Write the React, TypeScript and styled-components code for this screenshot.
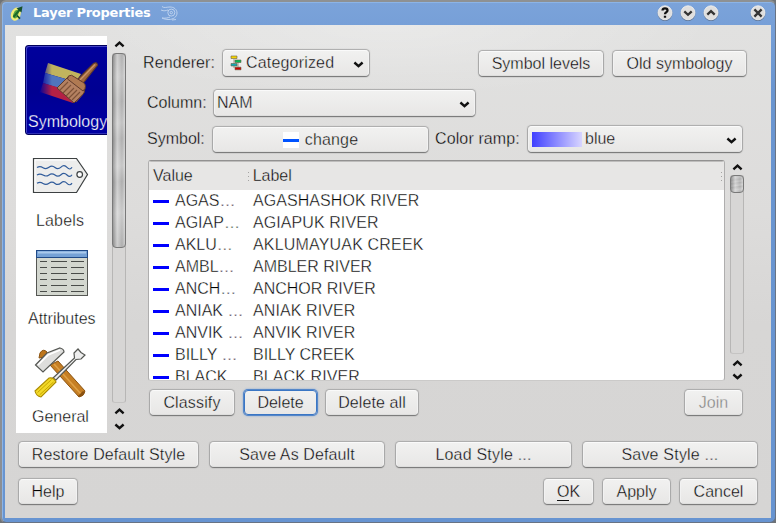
import React from "react";
import styled, { createGlobalStyle, css } from "styled-components";

const Global = createGlobalStyle`
  * { box-sizing: border-box; }
  html, body { margin: 0; padding: 0; overflow: hidden; }
  body { background: #6f7377; }
`;

/* A hairline in the surface colour slims the strokes of the letters. */
const slim = (paper: string, amount = 0.35) => css`
  -webkit-text-stroke: ${amount}px ${paper};
`;

const Dialog = styled.div`
  width: 776px;
  height: 523px;
  display: flex;
  flex-direction: column;
  background: linear-gradient(#7ba3da, #6a95d0 90px, #6794d1);
  border: 1px solid #687384;
  border-top: 2px solid #8e9193;
  border-left: 2px solid #8c8f94;
  border-radius: 6px;
  box-shadow: inset 1px 1px 0 #8cb4e6;
  padding: 0 4px 4px 3px;
  font-family: "Liberation Sans", Arial, sans-serif;
  font-size: 16px;
  line-height: 22px;
  color: #000;
  white-space: nowrap;
`;

const TitleBar = styled.header`
  height: 23px;
  flex: none;
  display: flex;
  align-items: center;
  padding: 0 5px 1px 5px;
`;

const Title = styled.h1`
  margin: 0 8px 1px 9px;
  font: bold 13px/18px "DejaVu Sans", sans-serif;
  letter-spacing: -0.25px;
  width: 119px;
  color: #fff;
`;

const WindowButtons = styled.div`
  display: flex;
  margin-left: auto;
  gap: 7px;
  svg:last-child { margin-left: 24px; }
`;

const Content = styled.main`
  flex: 1;
  min-height: 0;
  display: flex;
  flex-direction: column;
  padding: 11px 13px 0 11px;
  background:
    radial-gradient(ellipse 330px 70px at 50% 0, rgba(255, 255, 255, 0.28), transparent),
    linear-gradient(#e1e1e0, #dddcdb 190px, #d7d6d5 300px, #d6d5d4);
  ${slim("#dedddc")}
`;

const Upper = styled.div`
  display: flex;
  height: 397px;
`;

const PageList = styled.nav`
  width: 91px;
  height: 397px;
  background: #fff;
  overflow: hidden;
  padding: 8px 0 0 9px;
  ${slim("#fff")}
`;

const PageItem = styled.div<{ $active?: boolean }>`
  width: 88px;
  height: 98px;
  display: flex;
  flex-direction: column;
  justify-content: flex-end;
  ${(p) =>
    p.$active &&
    css`
      height: 90px;
      margin-top: 1px;
      border: 1px solid #00005c;
      border-radius: 3px;
      box-shadow: inset 1px 1px 0 #4444c6, inset 0 -1px 0 #3030b4;
      background: linear-gradient(#00009c, #000092 50%, #0000a2);
      color: #fff;
      ${slim("#00009c", 0.25)}
    `}
`;

const PageIcon = styled.div`
  height: 64px;
  svg { display: block; }
`;

const PageName = styled.span<{ $indent: number; $spacing?: number }>`
  height: 24px;
  line-height: 24px;
  padding-left: ${(p) => p.$indent}px;
  letter-spacing: ${(p) => p.$spacing ?? 0}px;
`;

const Scroll = styled.div<{ $height: number }>`
  width: 14px;
  height: ${(p) => p.$height}px;
  margin-left: 5px;
  display: flex;
  flex-direction: column;
  align-items: center;
  svg { flex: none; }
`;

const ScrollStep = styled.div<{ $height: number }>`
  height: ${(p) => p.$height}px;
  flex: none;
  display: flex;
  align-items: center;
`;

const Track = styled.div`
  width: 14px;
  flex: 1;
  border: 1px solid #b7b6b5;
  border-bottom-color: #c5c4c3;
  border-radius: 3px;
  background: #d7d6d5;
`;

const Thumb = styled.div<{ $height: number }>`
  width: 14px;
  height: ${(p) => p.$height}px;
  margin: -1px;
  border: 1px solid #797979;
  border-radius: 4px;
  background:
    linear-gradient(90deg, rgba(90, 90, 90, 0.35), rgba(255, 255, 255, 0.42) 35%, rgba(255, 255, 255, 0.05) 75%, rgba(255, 255, 255, 0.4)),
    linear-gradient(172deg, #aaa 0, #bdbdbd 12%, #aaa 25%, #bdbdbd 36%, #aaa 44%, #c1c1c1 58%, #a9a9a9 66%, #c4c4c4 82%, #a8a8a8);
`;

const Pane = styled.section`
  margin-left: 17px;
  width: 606px;
  display: flex;
  flex-direction: column;
`;

const Row = styled.div<{ $top?: number; $left?: number; $height?: number }>`
  display: flex;
  align-items: center;
  flex: none;
  margin-top: ${(p) => p.$top ?? 0}px;
  padding-left: ${(p) => p.$left ?? 0}px;
  height: ${(p) => p.$height ?? 28}px;
`;

const FieldLabel = styled.label<{ $left?: number; $width: number; $spacing?: number }>`
  margin-left: ${(p) => p.$left ?? 0}px;
  width: ${(p) => p.$width}px;
  flex: none;
  letter-spacing: ${(p) => p.$spacing ?? 0}px;
  padding-bottom: 1px;
`;

const face = css`
  font: inherit;
  color: inherit;
  flex: none;
  border: 1px solid;
  border-color: #fafafa #f2f2f2 #dededd;
  border-radius: 4px;
  background: linear-gradient(#f1f1f0, #e8e7e6);
  box-shadow: 0 1px 1px #777, 0 0 1px 0.5px #aaa;
  ${slim("#edecec")}
`;

const Button = styled.button<{ $width: number; $left?: number; $spacing?: number; $focus?: boolean }>`
  ${face}
  width: ${(p) => p.$width}px;
  height: 25px;
  margin-left: ${(p) => p.$left ?? 0}px;
  padding: 1px 0 0;
  line-height: 22px;
  letter-spacing: ${(p) => p.$spacing ?? 0}px;
  display: flex;
  justify-content: center;
  align-items: center;
  &:disabled { color: #7d7d7c; }
  ${(p) =>
    p.$focus &&
    css`
      border-color: #3a76c4;
      box-shadow: 0 0 0 1px #5587c9, 0 0 2px 1px #7fa4d6;
    `}
`;

const Select = styled.div<{ $width: number; $pad: number }>`
  ${face}
  width: ${(p) => p.$width}px;
  height: 26px;
  padding: 0 4px 0 ${(p) => p.$pad}px;
  display: flex;
  align-items: center;
  & > svg:last-child { margin: 2px 0 0 auto; }
`;

const SelectText = styled.span<{ $left?: number; $spacing?: number }>`
  margin-left: ${(p) => p.$left ?? 0}px;
  letter-spacing: ${(p) => p.$spacing ?? 0}px;
`;

const LineSwatch = styled.span`
  width: 16px;
  height: 16px;
  margin-right: 6px;
  background: linear-gradient(#fff 7px, #0053ff 7px 10px, #fff 10px);
`;

const RampSwatch = styled.span`
  width: 50px;
  height: 15px;
  background: linear-gradient(90deg, #4040ff, #d8d5ff);
`;

const Table = styled.div`
  width: 577px;
  height: 221px;
  border: 1px solid #afaeae;
  border-top: 1px solid #929191;
  border-bottom-color: #cbcac9;
  border-radius: 3px;
  background: #fff;
  overflow: hidden;
  ${slim("#fff")}
`;

const TableHead = styled.div`
  display: flex;
  align-items: center;
  height: 29px;
  padding-left: 4px;
  background: #e7e6e5;
  border-top: 1px solid #bebdbc;
  ${slim("#e7e6e5")}
`;

const HeadCell = styled.div<{ $width: number }>`
  width: ${(p) => p.$width}px;
  display: flex;
  justify-content: space-between;
  align-items: center;
  padding-right: 2px;
`;

const Grip = styled.i`
  width: 1px;
  height: 9px;
  background: repeating-linear-gradient(#a4a3a2 0 1px, transparent 1px 4px);
`;

const RiverRow = styled.div`
  display: grid;
  grid-template-columns: 22px 78px 1fr;
  height: 22px;
  padding-left: 4px;
`;

const Dash = styled.i`
  width: 16px;
  height: 3px;
  margin-top: 10px;
  background: #00f;
`;

const Cell = styled.span<{ $spacing?: number }>`
  letter-spacing: ${(p) => p.$spacing ?? 0}px;
`;

const Mnemonic = styled.span`
  border-bottom: 1px solid #111;
  line-height: 17px;
`;

const Chevron = ({ up }: { up?: boolean }) => (
  <svg width="11" height="7" viewBox="0 0 11 7" fill="none" stroke="#111" strokeWidth="2.4">
    <path d={up ? "M1.4 5.4 5.5 1.7 9.6 5.4" : "M1.4 1.5 5.5 5.2 9.6 1.5"} />
  </svg>
);

const AppIcon = () => (
  <svg width="14" height="17" viewBox="0 0 14 17">
    <ellipse cx="5.8" cy="9.2" rx="3.6" ry="5.6" transform="rotate(20 5.8 9.2)" fill="#58a53c" stroke="#f3ed78" strokeWidth="2.4" />
    <path d="M3.5 12 9.5 5" stroke="#1d6a2a" strokeWidth="2" />
    <path d="M6.5 3.6 12.5 1.2 11.5 7.5z" fill="#17512a" />
    <path d="M7 10.5l3 3.2" stroke="#17512a" strokeWidth="1.8" />
  </svg>
);

const Swirl = () => (
  <svg width="18" height="17" viewBox="0 0 18 17" fill="none" stroke="#c3d6ef" strokeWidth=".9">
    <path d="M2 1.5c2 2 5 .4 8 .5 4 0 7 2.500 7 6 0 4-4 6.500-8 6.500-3 0-5-.5-7-1.500 4 .5 6-.2 8-1M1 5c3 1.500 5 .5 7 0M12 15l4-.5" />
    <circle cx="11.3" cy="7.600" r="3.500" />
    <circle cx="11.3" cy="7.600" r="1.200" />
  </svg>
);

const RoundButton = ({ kind }: { kind: "help" | "down" | "up" | "close" }) => (
  <svg width="16" height="18" viewBox="0 0 16 18">
    <circle cx="8" cy="9.5" r="7.5" fill="#5d7190" />
    <circle cx="8" cy="8.8" r="7" fill="#e0dfde" stroke="#f5f5f5" strokeWidth=".8" />
    <g fill="none" stroke="#343434" strokeWidth="2.3">
      {kind === "help" && <path d="M5.5 6.500q.2-2.100 2.500-2.100 2.500 0 2.500 2 0 1-1.400 2Q8 9.200 8 10.300M8 11.700v2" stroke="#111" />}
      {kind === "down" && <path d="M4.300 7.400 8 10.800 11.700 7.400" />}
      {kind === "up" && <path d="M4.300 10.600 8 7.100l3.700 3.500" />}
      {kind === "close" && <path d="m4.400 5.400 7.200 7.200m0-7.200-7.200 7.200" />}
    </g>
  </svg>
);

const BrushIcon = () => (
  <svg width="84" height="64" viewBox="0 0 84 64">
    <defs>
      <linearGradient id="fade" x1="0" x2="1">
        <stop offset="0" stopColor="#00009a" />
        <stop offset=".3" stopColor="#00009a" stopOpacity="0" />
      </linearGradient>
    </defs>
    <path d="m22 17 33 11-5 8-31-9z" fill="#c1b45e" />
    <path d="m19 27 31 9-5 10-28-9z" fill="#5075bd" />
    <path d="m17 37 31 9-1 11-33-11z" fill="#b42045" />
    <path d="m21 16 35 11-9 31-34-11z" fill="url(#fade)" />
    <path d="M51 34 67.500 17.500q3.500-2 4 1.500L56.500 38z" fill="#a0673f" stroke="#603b2c" strokeWidth="1.1" />
    <path d="M54 34 69 18.500" stroke="#c99368" strokeWidth="1.3" />
    <path d="M42 31 31 42 48 57 58 47 59 42z" fill="#b48161" stroke="#5f3a2a" />
    <path d="M42 36 34 44m11-5-8 8m11-5-8 8m11-6-8 8m11-6-8 8m11-6-7 8" stroke="#7d5138" strokeWidth="1.100" />
    <path d="m41.500 33 1-3q3-2 6 1l8 5q4 2 2.500 6.500l-2 2.500z" fill="#b07a52" stroke="#603b2c" />
  </svg>
);

const LabelsIcon = () => (
  <svg width="82" height="64" viewBox="0 1 82 64">
    <path d="M8.5 14.5h43L62.5 30.500 51.500 48.500h-43z" fill="#ededec" stroke="#3d4142" strokeWidth="1.200" />
    <path d="M10 47V16h41" fill="none" stroke="#fff" />
    <circle cx="54.700" cy="30.500" r="2.800" fill="#fff" stroke="#3d4142" strokeWidth="1.200" />
    <path d="M12 23.500q3-1.800 6 .2t6-.4 6 .2 6-.4 6 .3 5-.2M12 31q3-1.800 6 .1t6-.2 6 .2 6-.4 6 .3 5-.2M12 39.300q3-1.800 6 .1t6-.2 6 .2 6-.4 6 .3 5-.2" fill="none" stroke="#315c9b" strokeWidth="1.200" />
  </svg>
);

const AttributesIcon = () => (
  <svg width="82" height="64" viewBox="0 1 82 64">
    <rect x="11.5" y="8.5" width="51" height="45" fill="#d3d7cf" stroke="#555753" />
    <rect x="11.5" y="8.5" width="51" height="7" fill="#75a1d5" stroke="#204a87" />
    <path d="M13 10.5h48" stroke="#aac9eb" strokeWidth="2" />
    <path d="M15 19.5h7m4 0h16m4 0h13M15 25.5h7m4 0h16m4 0h13M15 31.5h7m4 0h16m4 0h13M15 37.5h7m4 0h16m4 0h13M15 43.5h7m4 0h16m4 0h13M15 49.5h7m4 0h16m4 0h13" stroke="#494c49" />
  </svg>
);

const ToolsIcon = () => (
  <svg width="82" height="64" viewBox="0 0 82 64">
    <path d="m25 24 8-4 27 30q-1 5-6 6z" fill="#c67f24" stroke="#8b520f" />
    <path d="m29 23 27 30" stroke="#dfa046" strokeWidth="1.600" />
    <path d="m53 55 5-5 2 1q-1 4-5 5z" fill="#8b520f" />
    <path d="m14 17 1-5q3-5 7-1l-2 5z" fill="#bd761c" stroke="#8b520f" />
    <path d="M10.500 24 22 12l13-5q4 1 4 4L18 31z" fill="#dededc" stroke="#555753" strokeWidth="1.200" />
    <path d="M13 24 23 14l12-5" fill="none" stroke="#fff" strokeWidth="1.600" />
    <path d="M28 37 49.500 17l-.5-5 4-4 3 3.500 4 2.500-4 4-5 .5L31 39z" fill="#eee" stroke="#555753" strokeWidth="1.200" />
    <path d="m10 50 14-13q5-1 7 4L16 56q-5-1-6-6z" fill="#f3d928" stroke="#ad8c00" strokeWidth="1.100" />
    <path d="m12.500 51.500 14-13m-12 15.500 14-13" stroke="#c8a700" />
  </svg>
);

const CategoryIcon = () => (
  <svg width="12" height="16" viewBox="0 0 12 16" stroke="#685f45" strokeWidth=".6">
    <path d="M4 4v9m4-8v8" />
    <path d="M1 1h6v2.500H1z" fill="#f5d400" />
    <path d="M5 5h6v2.500H5z" fill="#00b956" />
    <path d="M1 8.500h6V11H1z" fill="#13a8b4" />
    <path d="M5 12.200h6v2.600H5z" fill="#c80000" />
  </svg>
);

const rivers: { value: string; label: string; spacing?: number }[] = [
  { value: "AGAS…", label: "AGASHASHOK RIVER", spacing: 0.06 },
  { value: "AGIAP…", label: "AGIAPUK RIVER", spacing: 0.08 },
  { value: "AKLU…", label: "AKLUMAYUAK CREEK", spacing: 0.18 },
  { value: "AMBL…", label: "AMBLER RIVER" },
  { value: "ANCH…", label: "ANCHOR RIVER" },
  { value: "ANIAK …", label: "ANIAK RIVER", spacing: 0.1 },
  { value: "ANVIK …", label: "ANVIK RIVER", spacing: 0.1 },
  { value: "BILLY …", label: "BILLY CREEK" },
  { value: "BLACK…", label: "BLACK RIVER", spacing: 0.1 },
];

export default function App() {
  return (
    <>
      <Global />
      <Dialog>
        <TitleBar>
          <AppIcon />
          <Title>Layer Properties</Title>
          <Swirl />
          <WindowButtons>
            <RoundButton kind="help" />
            <RoundButton kind="down" />
            <RoundButton kind="up" />
            <RoundButton kind="close" />
          </WindowButtons>
        </TitleBar>
        <Content>
          <Upper>
            <PageList>
              <PageItem $active>
                <PageIcon><BrushIcon /></PageIcon>
                <PageName $indent={2}>Symbology</PageName>
              </PageItem>
              <PageItem>
                <PageIcon><LabelsIcon /></PageIcon>
                <PageName $indent={11} $spacing={0.15}>Labels</PageName>
              </PageItem>
              <PageItem>
                <PageIcon><AttributesIcon /></PageIcon>
                <PageName $indent={3}>Attributes</PageName>
              </PageItem>
              <PageItem>
                <PageIcon><ToolsIcon /></PageIcon>
                <PageName $indent={7}>General</PageName>
              </PageItem>
            </PageList>
            <Scroll $height={397}>
              <ScrollStep $height={17}><Chevron up /></ScrollStep>
              <Track><Thumb $height={195} /></Track>
              <ScrollStep $height={16}><Chevron up /></ScrollStep>
              <ScrollStep $height={14}><Chevron /></ScrollStep>
            </Scroll>
            <Pane>
              <Row $top={13}>
                <FieldLabel $width={80} $spacing={0.1}>Renderer:</FieldLabel>
                <Select $width={146} $pad={6}>
                  <CategoryIcon />
                  <SelectText $left={4} $spacing={0.18}>Categorized</SelectText>
                  <Chevron />
                </Select>
                <Button $width={124} $left={110}>Symbol levels</Button>
                <Button $width={133} $left={10}>Old symbology</Button>
              </Row>
              <Row $top={12}>
                <FieldLabel $left={4} $width={67}>Column:</FieldLabel>
                <Select $width={261} $pad={2}>
                  <SelectText>NAM</SelectText>
                  <Chevron />
                </Select>
              </Row>
              <Row $top={8}>
                <FieldLabel $left={4} $width={66}>Symbol:</FieldLabel>
                <Button $width={215} $spacing={0.15}><LineSwatch />change</Button>
                <FieldLabel $left={7} $width={93} $spacing={0.12}>Color ramp:</FieldLabel>
                <Select $width={214} $pad={3}>
                  <RampSwatch />
                  <SelectText $left={3}>blue</SelectText>
                  <Chevron />
                </Select>
              </Row>
              <Row $top={7} $left={5} $height={221}>
                <Table>
                  <TableHead>
                    <HeadCell $width={98}>Value<Grip /></HeadCell>
                    <HeadCell $width={475}><SelectText $left={2}>Label</SelectText><Grip /></HeadCell>
                  </TableHead>
                  {rivers.map(({ value, label, spacing }) => (
                    <RiverRow key={label}>
                      <Dash />
                      <Cell>{value}</Cell>
                      <Cell $spacing={spacing}>{label}</Cell>
                    </RiverRow>
                  ))}
                </Table>
                <Scroll $height={221}>
                  <ScrollStep $height={15}><Chevron up /></ScrollStep>
                  <Track><Thumb $height={18} /></Track>
                  <ScrollStep $height={18}><Chevron up /></ScrollStep>
                  <ScrollStep $height={9}><Chevron /></ScrollStep>
                </Scroll>
              </Row>
              <Row $top={7} $left={7}>
                <Button $width={84} $spacing={0.15}>Classify</Button>
                <Button $width={73} $left={10} $focus>Delete</Button>
                <Button $width={92} $left={9} $spacing={0.1}>Delete all</Button>
                <Button $width={57} $left={267} disabled>Join</Button>
              </Row>
            </Pane>
          </Upper>
          <Row $top={7} $left={3}>
            <Button $width={179} $spacing={0.1}>Restore Default Style</Button>
            <Button $width={174} $left={12} $spacing={0.1}>Save As Default</Button>
            <Button $width={175} $left={12} $spacing={0.2}>Load Style ...</Button>
            <Button $width={174} $left={12} $spacing={0.2}>Save Style ...</Button>
          </Row>
          <Row $top={9} $left={3}>
            <Button $width={58}>Help</Button>
            <Button $width={49} $left={467}><Mnemonic>O</Mnemonic>K</Button>
            <Button $width={67} $left={10}>Apply</Button>
            <Button $width={77} $left={10}>Cancel</Button>
          </Row>
        </Content>
      </Dialog>
    </>
  );
}
